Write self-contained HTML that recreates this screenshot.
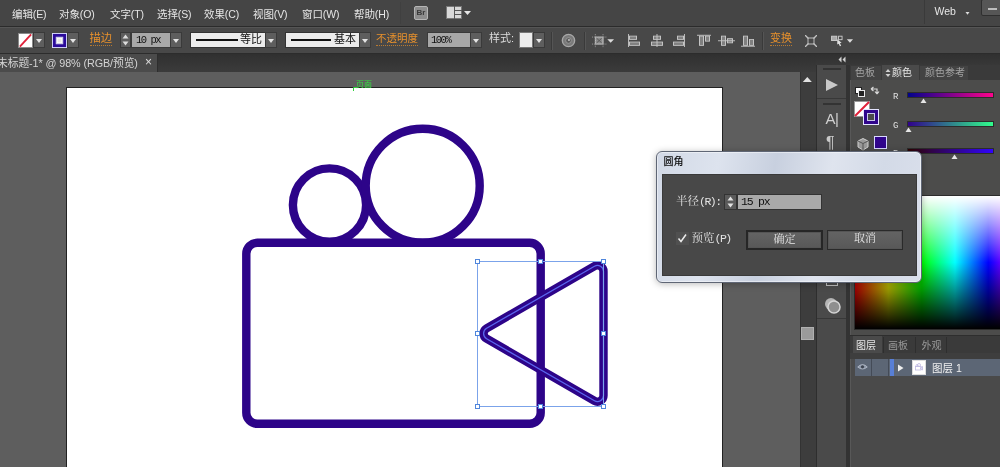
<!DOCTYPE html>
<html lang="zh-CN">
<head>
<meta charset="utf-8">
<title>Illustrator</title>
<style>
*{box-sizing:border-box;margin:0;padding:0}
html,body{width:1000px;height:467px;overflow:hidden;background:#fff}
body{font-family:"Liberation Sans","Noto Sans CJK SC",sans-serif;font-size:11px;color:#d8d8d8;position:relative}
.abs{position:absolute}
#menubar{left:0;top:0;width:1000px;height:26px;background:#454545}
#menubar span{position:absolute;top:6.5px;font-size:10.5px;line-height:14px;color:#e6e6e6;white-space:nowrap;letter-spacing:-0.1px}
#mline{left:0;top:26px;width:1000px;height:1px;background:#2b2b2b}
#ctrl{left:0;top:27px;width:1000px;height:26px;background:#484848;border-top:1px solid #555}
#ctrl .t{position:absolute;top:4px;font-size:11px;line-height:13px;white-space:nowrap}
.or{color:#e8912c;border-bottom:1px dotted #b87a30}
.dd{position:absolute;top:4px;height:16px;width:12px;background:#5e5e5e;border:1px solid #3a3a3a}
.dd:after{content:"";position:absolute;left:2px;top:6px;border-left:3px solid transparent;border-right:3px solid transparent;border-top:4px solid #e4e4e4}
.fld{position:absolute;top:4px;height:16px;background:#a8a8a8;color:#111;font-size:10.500px;letter-spacing:-1.5px;line-height:14px;padding-left:4px;border:1px solid #3a3a3a;font-family:"Liberation Mono","Noto Sans CJK SC",monospace}
.wbox{position:absolute;top:4px;height:16px;background:#ececec;border:1px solid #333;color:#111;font-size:11px;line-height:13px}
.sep{position:absolute;top:4px;width:1px;height:18px;background:#3a3a3a;box-shadow:1px 0 0 #555}
#cline{left:0;top:53px;width:1000px;height:1px;background:#2c2c2c}
#tabbar{left:0;top:54px;width:816px;height:18px;background:linear-gradient(#303030,#3b3b3b)}
#tab{left:0;top:54px;width:158px;height:18px;background:#4b4b4b;border-right:1px solid #2e2e2e;overflow:hidden}
#tab span{position:absolute;top:2px;font-size:10.800px;letter-spacing:-0.1px;line-height:14px;color:#d4d4d4;white-space:nowrap}
#canvas{left:0;top:72px;width:800px;height:395px;background:#5e5e5e}
#artboard{left:66px;top:87px;width:657px;height:400px;background:#fff;border:1px solid #222}
</style>
</head>
<body><div id="root" style="position:absolute;left:0;top:0;width:1000px;height:467px;opacity:.999;will-change:transform">
<div id="canvas" class="abs"></div>
<div id="artboard" class="abs"></div>

<!-- artwork -->
<svg class="abs" style="left:0;top:0" width="1000" height="467" viewBox="0 0 1000 467">
  <g fill="none" stroke="#2d0489" stroke-width="8.4">
    <circle cx="329.5" cy="205" r="36.6"/>
    <circle cx="422.7" cy="185.7" r="57"/>
    <rect x="246.3" y="242.8" width="294.4" height="181" rx="11" ry="11"/>
    <path d="M594.5 266.2 A6 6 0 0 1 603.5 271.4 L603.5 395.6 A6 6 0 0 1 594.5 400.8 L486.6 338.7 A6 6 0 0 1 486.6 328.3 Z"/>
  </g>
  <path d="M594.5 266.2 A6 6 0 0 1 603.5 271.4 L603.5 395.6 A6 6 0 0 1 594.5 400.8 L486.6 338.7 A6 6 0 0 1 486.6 328.3 Z" fill="none" stroke="#5a66ee" stroke-width="1.300"/>
  <rect x="477.5" y="261.5" width="126" height="145" fill="none" stroke="#7ba3ea" stroke-width="1"/>
  <g fill="#fff" stroke="#4f86dc" stroke-width="1">
    <rect x="475.5" y="259.5" width="4" height="4"/><rect x="538.5" y="259.5" width="4" height="4"/><rect x="601.5" y="259.5" width="4" height="4"/>
    <rect x="475.5" y="331.5" width="4" height="4"/><rect x="601.5" y="331.5" width="4" height="4"/>
    <rect x="475.5" y="404.5" width="4" height="4"/><rect x="538.5" y="404.5" width="4" height="4"/><rect x="601.5" y="404.5" width="4" height="4"/>
  </g>
  <!-- smart guide label -->
  <path d="M353.5 91 V87.5 H357" fill="none" stroke="#2fd13a" stroke-width="1"/>
  <text x="356" y="86.5" font-size="8" fill="#35e040" font-family="Liberation Sans, Noto Sans CJK SC, sans-serif">页面</text>
</svg>

<!-- menu bar -->
<div id="menubar" class="abs">
  <span style="left:12px">编辑(E)</span>
  <span style="left:59px">对象(O)</span>
  <span style="left:110px">文字(T)</span>
  <span style="left:157px">选择(S)</span>
  <span style="left:204px">效果(C)</span>
  <span style="left:253px">视图(V)</span>
  <span style="left:302px">窗口(W)</span>
  <span style="left:354px">帮助(H)</span>
  <div class="abs" style="left:400px;top:2px;width:1px;height:22px;background:#404040"></div>
  <div class="abs" style="left:414px;top:6px;width:14px;height:14px;background:#8d8d8d;border:1px solid #b5b5b5;border-radius:2px;color:#3a3a3a;font-size:8px;line-height:12px;text-align:center;font-weight:bold">Br</div>
  <svg class="abs" style="left:446px;top:6px" width="26" height="14" viewBox="0 0 26 14">
    <rect x="0.5" y="0.5" width="15" height="12" fill="#d8d8d8" stroke="#777"/>
    <path d="M8.5 0V13M8.5 4.5H16M8.5 8.5H16" stroke="#555" stroke-width="1"/>
    <path d="M18 5h7l-3.5 4z" fill="#e6e6e6"/>
  </svg>
  <div class="abs" style="left:924px;top:0;width:1px;height:24px;background:#3a3a3a"></div>
  <span style="left:934.500px;top:4px;font-size:10.5px;letter-spacing:0">Web</span>
  <svg class="abs" style="left:964px;top:11px" width="8" height="6"><path d="M1.500 1h4l-2 2.800z" fill="#ddd"/></svg>
  <div class="abs" style="left:981px;top:-1px;width:22px;height:17px;background:#565656;border:1px solid #2f2f2f;border-radius:2px"></div>
  <div class="abs" style="left:988px;top:8px;width:9px;height:2px;background:#bdbdbd"></div>
</div>
<div id="mline" class="abs"></div>

<!-- control bar -->
<div id="ctrl" class="abs">
  <!-- fill swatch -->
  <svg class="abs" style="left:17.500px;top:4.500px" width="15" height="15" viewBox="0 0 16 16"><rect x="0.5" y="0.5" width="15" height="15" fill="#fff" stroke="#888"/><path d="M2 14.500L14 1.500" stroke="#e0213a" stroke-width="2"/></svg>
  <div class="dd" style="left:33px"></div>
  <!-- stroke swatch -->
  <svg class="abs" style="left:51.500px;top:4.500px" width="15" height="15" viewBox="0 0 16 16"><rect x="0.500" y="0.500" width="15" height="15" fill="#2a0a9a" stroke="#d8d8ff"/><rect x="4.500" y="4.500" width="7" height="7" fill="#fff" stroke="#cfcfe8"/><rect x="6" y="6" width="4" height="4" fill="#e8e8e8"/></svg>
  <div class="dd" style="left:67px"></div>
  <span class="t or" style="left:89.5px;font-size:11.3px">描边</span>
  <!-- spinner -->
  <div class="abs" style="left:120px;top:4px;width:11px;height:16px;background:#5e5e5e;border:1px solid #3a3a3a"></div>
  <svg class="abs" style="left:120px;top:4px" width="11" height="16"><path d="M2.500 6.500h6l-3-4z M2.500 9.500h6l-3 4z" fill="#ddd"/></svg>
  <div class="fld" style="left:131px;width:40px">10 px</div>
  <div class="dd" style="left:170px"></div>
  <!-- profile -->
  <div class="wbox" style="left:190px;width:76px"><div class="abs" style="left:5px;top:6px;width:42px;height:2px;background:#111"></div><span class="abs" style="left:49px;top:0">等比</span></div>
  <div class="dd" style="left:265px"></div>
  <div class="wbox" style="left:285px;width:75px"><div class="abs" style="left:5px;top:6px;width:40px;height:2px;background:#111"></div><span class="abs" style="left:48px;top:0">基本</span></div>
  <div class="dd" style="left:359px"></div>
  <span class="t or" style="left:376px;font-size:10.5px">不透明度</span>
  <div class="fld" style="left:427px;width:44px;padding-left:3px">100%</div>
  <div class="dd" style="left:470px"></div>
  <span class="t" style="left:489px;color:#dcdcdc">样式:</span>
  <div class="abs" style="left:519px;top:4px;width:14px;height:16px;background:#ededed;border:1px solid #777"></div>
  <div class="dd" style="left:533px"></div>
  <div class="sep" style="left:551px"></div>
  <!-- globe -->
  <svg class="abs" style="left:560.500px;top:5px" width="15" height="15" viewBox="0 0 17 17"><circle cx="8.500" cy="8.500" r="7" fill="#7a7a7a" stroke="#a8a8a8" stroke-width="1.500"/><circle cx="8.500" cy="8.500" r="3.200" fill="#5a5a5a" stroke="#9a9a9a"/><circle cx="9" cy="8" r="1.200" fill="#bdbdbd"/></svg>
  <div class="sep" style="left:584px"></div>
  <!-- align to -->
  <svg class="abs" style="left:592px;top:5.500px" width="23" height="14" viewBox="0 0 24 16" preserveAspectRatio="none"><rect x="3.500" y="3.500" width="8" height="8" fill="#8a8a8a" stroke="#cfcfcf"/><path d="M3.500 0V16M11.500 0V16M0 3.500H15M0 11.500H15" stroke="#9a9a9a" stroke-width="1" stroke-dasharray="1 1"/><path d="M5 5l5 5M10 5l-5 5" stroke="#555" stroke-width="1"/><path d="M16 6h7l-3.500 4z" fill="#ddd"/></svg>
  <!-- horizontal align icons -->
  <svg class="abs" style="left:627px;top:5.500px" width="60" height="13.500" viewBox="0 0 60 16" preserveAspectRatio="none">
    <g fill="#808080" stroke="#c4c4c4" stroke-width="1">
      <rect x="2.500" y="2.500" width="7" height="4"/><rect x="2.500" y="9.500" width="10" height="4"/>
      <rect x="26.500" y="2.500" width="7" height="4"/><rect x="24.500" y="9.500" width="11" height="4"/>
      <rect x="50.500" y="2.500" width="6" height="4"/><rect x="46.500" y="9.500" width="10" height="4"/>
    </g>
    <path d="M1.500 0V16M30 0V16M57.500 0V16" stroke="#c4c4c4" stroke-width="1"/>
  </svg>
  <!-- vertical align icons -->
  <svg class="abs" style="left:697px;top:5.500px" width="60" height="13.500" viewBox="0 0 60 16" preserveAspectRatio="none">
    <g fill="#808080" stroke="#c4c4c4" stroke-width="1">
      <rect x="2.500" y="2.500" width="4" height="11"/><rect x="8.500" y="2.500" width="4" height="6"/>
      <rect x="24.500" y="2.500" width="4" height="11"/><rect x="30.500" y="5.500" width="5" height="5"/>
      <rect x="46.500" y="2.500" width="4" height="11"/><rect x="52.500" y="6.500" width="4" height="7"/>
    </g>
    <path d="M0 1.500H14M21 8H38M44 14.500H58" stroke="#c4c4c4" stroke-width="1"/>
  </svg>
  <div class="sep" style="left:762px"></div>
  <span class="t or" style="left:770px">变换</span>
  <svg class="abs" style="left:805px;top:7px" width="12" height="12" viewBox="0 0 14 14"><rect x="3.500" y="3.500" width="7" height="7" fill="none" stroke="#d0d0d0"/><path d="M0 0l4 4M14 0l-4 4M0 14l4-4M14 14l-4-4" stroke="#c4c4c4" stroke-width="1.500"/></svg>
  <svg class="abs" style="left:830px;top:6px" width="25" height="14" viewBox="0 0 28 16"><rect x="1.500" y="2.500" width="6" height="5" fill="#aaa" stroke="#d0d0d0"/><rect x="9.500" y="2.500" width="4" height="4" fill="none" stroke="#d0d0d0"/><path d="M8 6l5 4-2 .5 1.500 3-1.500.5-1.300-3L8 12z" fill="#e0e0e0"/><path d="M19 6h7l-3.500 4z" fill="#ddd"/></svg>
</div>
<div id="cline" class="abs"></div>

<!-- document tab bar -->
<div id="tabbar" class="abs"></div>
<div id="tab" class="abs"><span style="left:-3px">未标题-1* @ 98% (RGB/预览)</span><span style="left:145px;top:1px;font-size:12px;color:#e0e0e0">×</span></div>

<!-- right side -->
<style>
#vscroll{left:800px;top:72px;width:16px;height:395px;background:#3d3d3d;border-left:1px solid #333}
#dockhead{left:816px;top:54px;width:184px;height:11px;background:linear-gradient(#303030,#383838)}
#toolcol{left:816px;top:65px;width:30px;height:402px;background:#4a4a4a;border-left:1px solid #2e2e2e}
#gap{left:846px;top:65px;width:4px;height:402px;background:#333}
#ptabs1{left:850px;top:65px;width:150px;height:15px;background:#3a3a3a}
#ptabs1 span,#ptabs2 span{position:absolute;font-size:10px;line-height:13px;white-space:nowrap}
#colorpanel{left:850px;top:80px;width:150px;border-left:1px solid #585858;height:255px;background:#4c4c4b}
#ptabs2{left:850px;top:335px;width:150px;height:18px;background:#3a3a3a;border-top:1px solid #2e2e2e}
#layers{left:850px;top:353px;width:150px;border-left:1px solid #585858;height:114px;background:#4a4a4a}
</style>
<div id="vscroll" class="abs"></div>
<svg class="abs" style="left:802px;top:76px" width="11" height="7"><path d="M0.800 6h9l-4.500-5z" fill="#e2e2e2"/></svg>
<div class="abs" style="left:801px;top:327px;width:13px;height:13px;background:#9b9b9b;border:1px solid #b0b0b0"></div>
<div id="dockhead" class="abs"></div>
<svg class="abs" style="left:838px;top:56px" width="8" height="7"><path d="M3.500 0.500L0.500 3.500l3 3zM7.500 0.500L4.500 3.500l3 3z" fill="#d0d0d0"/></svg>
<div id="toolcol" class="abs"></div>
<div id="gap" class="abs"></div>
<!-- tool icons -->
<div class="abs" style="left:823px;top:68px;width:18px;height:2px;background:#333"></div>
<svg class="abs" style="left:825px;top:78px" width="14" height="14"><path d="M1 1v12l12-6z" fill="#c9c9c9"/></svg>
<div class="abs" style="left:817px;top:98px;width:29px;height:1px;background:#383838"></div>
<div class="abs" style="left:823px;top:103px;width:18px;height:2px;background:#333"></div>
<div class="abs" style="left:825.500px;top:109px;font-size:15px;line-height:20px;color:#cfcfcf;letter-spacing:-0.5px">A|</div>
<div class="abs" style="left:826px;top:133px;font-size:16px;line-height:20px;color:#c9c9c9">¶</div>
<svg class="abs" style="left:824px;top:297px" width="17" height="17" viewBox="0 0 17 17"><circle cx="7" cy="7" r="6" fill="#b5b5b5"/><circle cx="10" cy="10" r="6" fill="#8f8f8f" stroke="#d5d5d5" stroke-width="1.500"/></svg>
<div class="abs" style="left:817px;top:318px;width:29px;height:1px;background:#383838"></div>
<div class="abs" style="left:826px;top:282px;width:12px;height:4px;border:1px solid #bdbdbd;border-top:none"></div>

<!-- color panel -->
<div id="ptabs1" class="abs">
  <div class="abs" style="left:1px;top:1px;width:30px;height:14px;background:#434343"></div>
  <div class="abs" style="left:70px;top:1px;width:48px;height:14px;background:#434343"></div>
  <span style="left:5px;top:1px;color:#a4a4a4">色板</span>
  <div class="abs" style="left:32px;top:0;width:37px;height:15px;background:#4a4a4a"></div>
  <svg class="abs" style="left:35px;top:3px" width="6" height="10"><path d="M0.500 4L3 1l2.500 3zM0.500 6L3 9l2.500-3z" fill="#d0d0d0"/></svg>
  <span style="left:42px;top:1px;color:#e6e6e6">颜色</span>
  <span style="left:75px;top:1px;color:#a4a4a4">颜色参考</span>
</div>
<div id="colorpanel" class="abs"></div>
<svg class="abs" style="left:851px;top:80px" width="149" height="255" viewBox="851 80 149 255">
  <defs>
    <linearGradient id="gr" x1="0" x2="1"><stop offset="0" stop-color="#00038c"/><stop offset="1" stop-color="#ff038c"/></linearGradient>
    <linearGradient id="gg" x1="0" x2="1"><stop offset="0" stop-color="#30008c"/><stop offset="1" stop-color="#30ff8c"/></linearGradient>
    <linearGradient id="gb" x1="0" x2="1"><stop offset="0" stop-color="#300300"/><stop offset="1" stop-color="#3003ff"/></linearGradient>
    <linearGradient id="hue" x1="0" x2="1">
      <stop offset="0" stop-color="#f00"/><stop offset="0.1667" stop-color="#ff0"/><stop offset="0.3333" stop-color="#0f0"/><stop offset="0.5" stop-color="#0ff"/><stop offset="0.6667" stop-color="#00f"/><stop offset="0.8333" stop-color="#f0f"/><stop offset="1" stop-color="#f00"/>
    </linearGradient>
    <linearGradient id="wb" x1="0" y1="0" x2="0" y2="1">
      <stop offset="0" stop-color="#fff" stop-opacity="1"/><stop offset="0.5" stop-color="#fff" stop-opacity="0"/><stop offset="0.5" stop-color="#000" stop-opacity="0"/><stop offset="1" stop-color="#000" stop-opacity="1"/>
    </linearGradient>
  </defs>
  <!-- default / swap icons -->
  <rect x="855.500" y="87.500" width="6" height="6" fill="#fff" stroke="#222"/><rect x="858.500" y="90.500" width="6" height="6" fill="#222" stroke="#e8e8e8"/>
  <path d="M871 89h6v5M877 94l-2-2.500M877 94l2-2.500M871 89l2.500-2M871 89l2.500 2" stroke="#d8d8d8" fill="none" stroke-width="1.200"/>
  <!-- fill none -->
  <rect x="854.500" y="101.500" width="15" height="15" fill="#fff" stroke="#999"/><path d="M855 116L869 102" stroke="#e0213a" stroke-width="2"/>
  <!-- stroke -->
  <rect x="863.500" y="109.500" width="15" height="15" fill="#30058c" stroke="#e4e4ff"/><rect x="867.500" y="113.500" width="7" height="7" fill="#4a4a4a" stroke="#c8c8e8"/>
  <!-- cube + swatch -->
  <path d="M863 138.500l5 2.500v6l-5 3-5-3v-6z" fill="#9a9a9a" stroke="#d0d0d0"/><path d="M858 141l5 2.500 5-2.500M863 143.500v6.500" stroke="#555" fill="none"/>
  <rect x="874.500" y="136.500" width="12" height="12" fill="#30058c" stroke="#d8d8ff"/>
  <!-- sliders -->
  <text x="893" y="99" font-size="9" fill="#e0e0e0" font-family="Liberation Mono, monospace">R</text>
  <rect x="907.500" y="92.500" width="86" height="5" fill="url(#gr)" stroke="#2c2c2c"/>
  <path d="M920.500 103h6l-3-4.500z" fill="#e6e6e6"/>
  <text x="893" y="128" font-size="9" fill="#e0e0e0" font-family="Liberation Mono, monospace">G</text>
  <rect x="907.500" y="121.500" width="86" height="5" fill="url(#gg)" stroke="#2c2c2c"/>
  <path d="M905.500 132h6l-3-4.500z" fill="#e6e6e6"/>
  <text x="893" y="156" font-size="9" fill="#e0e0e0" font-family="Liberation Mono, monospace">B</text>
  <rect x="907.500" y="148.500" width="86" height="5" fill="url(#gb)" stroke="#2c2c2c"/>
  <path d="M951.500 159h6l-3-4.500z" fill="#e6e6e6"/>
  <!-- spectrum -->
  <rect x="854.500" y="195.500" width="150" height="134" fill="#222" stroke="#2c2c2c"/>
  <rect x="855" y="196" width="200" height="133" fill="url(#hue)"/>
  <rect x="855" y="196" width="200" height="133" fill="url(#wb)"/>
</svg>

<!-- layers panel -->
<div id="ptabs2" class="abs">
  <div class="abs" style="left:3px;top:0;width:29px;height:17px;background:#4a4a4a"></div>
  <span style="left:6px;top:3px;color:#e6e6e6">图层</span>
  <span style="left:38px;top:3px;color:#9a9a9a">画板</span>
  <span style="left:71.5px;top:3px;color:#9a9a9a">外观</span>
  <div class="abs" style="left:33px;top:1px;width:1px;height:16px;background:#2e2e2e"></div>
  <div class="abs" style="left:65px;top:1px;width:1px;height:16px;background:#2e2e2e"></div>
  <div class="abs" style="left:96px;top:1px;width:1px;height:16px;background:#2e2e2e"></div>
</div>
<div id="layers" class="abs"></div>
<div class="abs" style="left:850px;top:353px;width:150px;height:6px;background:#3e3e3e"></div>
<div class="abs" style="left:855px;top:359px;width:145px;height:17px;background:#5c6675"></div>
<div class="abs" style="left:871px;top:359px;width:1px;height:17px;background:#444b57"></div>
<div class="abs" style="left:888px;top:359px;width:1px;height:17px;background:#444b57"></div>
<svg class="abs" style="left:857px;top:363px" width="11" height="8" viewBox="0 0 13 10"><path d="M0.500 5Q6.500 -1 12.500 5Q6.500 10 0.500 5Z" fill="#8d97a8" stroke="#c8cedb" stroke-width="0.800"/><circle cx="6.500" cy="4.800" r="2" fill="#3d4450"/></svg>
<div class="abs" style="left:890px;top:359px;width:4px;height:17px;background:#587fd6"></div>
<svg class="abs" style="left:897px;top:364px" width="8" height="9"><path d="M1 0.500v7l5.500-3.500z" fill="#eee"/></svg>
<div class="abs" style="left:912px;top:360px;width:14px;height:15px;background:#fff;border:1px solid #ddd"></div>
<svg class="abs" style="left:913px;top:361px" width="12" height="13" viewBox="0 0 12 13"><g fill="none" stroke="#bdb8e2" stroke-width="0.800"><circle cx="4" cy="4.500" r="1"/><circle cx="6" cy="4" r="1.500"/><rect x="2.500" y="5.500" width="5.500" height="3.500"/><path d="M9.500 5.500v3.500l-2.500-1.750z"/></g></svg>
<div class="abs" style="left:932px;top:360.500px;font-size:10.500px;line-height:14px;color:#f0f0f0;white-space:nowrap">图层 1</div>

<!-- dialog -->
<style>
#dlg{left:656px;top:151px;width:266px;height:132px;background:linear-gradient(100deg,#d2d9e6 0%,#dde3ee 22%,#c8d0df 42%,#dfe4ee 62%,#d3dae7 80%,#dbe0ec 100%);border:1px solid #5f6675;border-radius:6px;box-shadow:0 0 0 1px rgba(255,255,255,.45) inset,0 1px 7px rgba(0,0,0,.28)}
#dlgbody{left:662px;top:174px;width:255px;height:102px;background:#484848;border:1px solid #3a3a3a}
.btn{position:absolute;height:20px;border:1px solid #2a2a2a;background:linear-gradient(#646464,#585858);color:#e8e8e8;font-size:11px;line-height:17px;text-align:center;box-shadow:0 0 0 1px #555 inset}
.sim{font-family:"Liberation Mono","Noto Serif CJK SC","Noto Sans CJK SC",monospace}
.hw{letter-spacing:-1.5px}
</style>
<div id="dlg" class="abs"></div>
<div class="abs" style="left:663.500px;top:154.500px;font-size:10px;line-height:14px;color:#0a0a0a;font-weight:500">圆角</div>
<div id="dlgbody" class="abs"></div>
<div class="abs sim" style="left:676px;top:194px;font-size:11.500px;line-height:15px;color:#e2e2e2;white-space:nowrap">半径<span class="hw">(R):</span></div>
<div class="abs" style="left:724px;top:194px;width:13px;height:16px;background:#5a5a5a;border:1px solid #333"></div>
<svg class="abs" style="left:724px;top:194px" width="13" height="16"><path d="M3.500 6.500h6l-3-4z M3.500 9.500h6l-3 4z" fill="#e2e2e2"/></svg>
<div class="abs sim" style="left:737px;top:194px;width:85px;height:16px;background:#a9a9a9;border:1px solid #333;color:#111;font-size:11.500px;letter-spacing:-1.2px;line-height:14px;padding-left:3px">15 px</div>
<svg class="abs" style="left:676px;top:232px" width="13" height="13" viewBox="0 0 13 13"><rect x="0" y="0" width="13" height="13" fill="#505050"/><path d="M2.500 6.500l2.500 3 5-7" stroke="#ececec" stroke-width="1.500" fill="none"/></svg>
<div class="abs sim" style="left:691.500px;top:231px;font-size:11.500px;line-height:15px;color:#e2e2e2;white-space:nowrap">预览<span class="hw">(P)</span></div>
<div class="btn sim" style="left:746px;top:230px;width:77px;border:2px solid #262626">确定</div>
<div class="btn sim" style="left:827px;top:230px;width:76px">取消</div>

</div></body>
</html>
